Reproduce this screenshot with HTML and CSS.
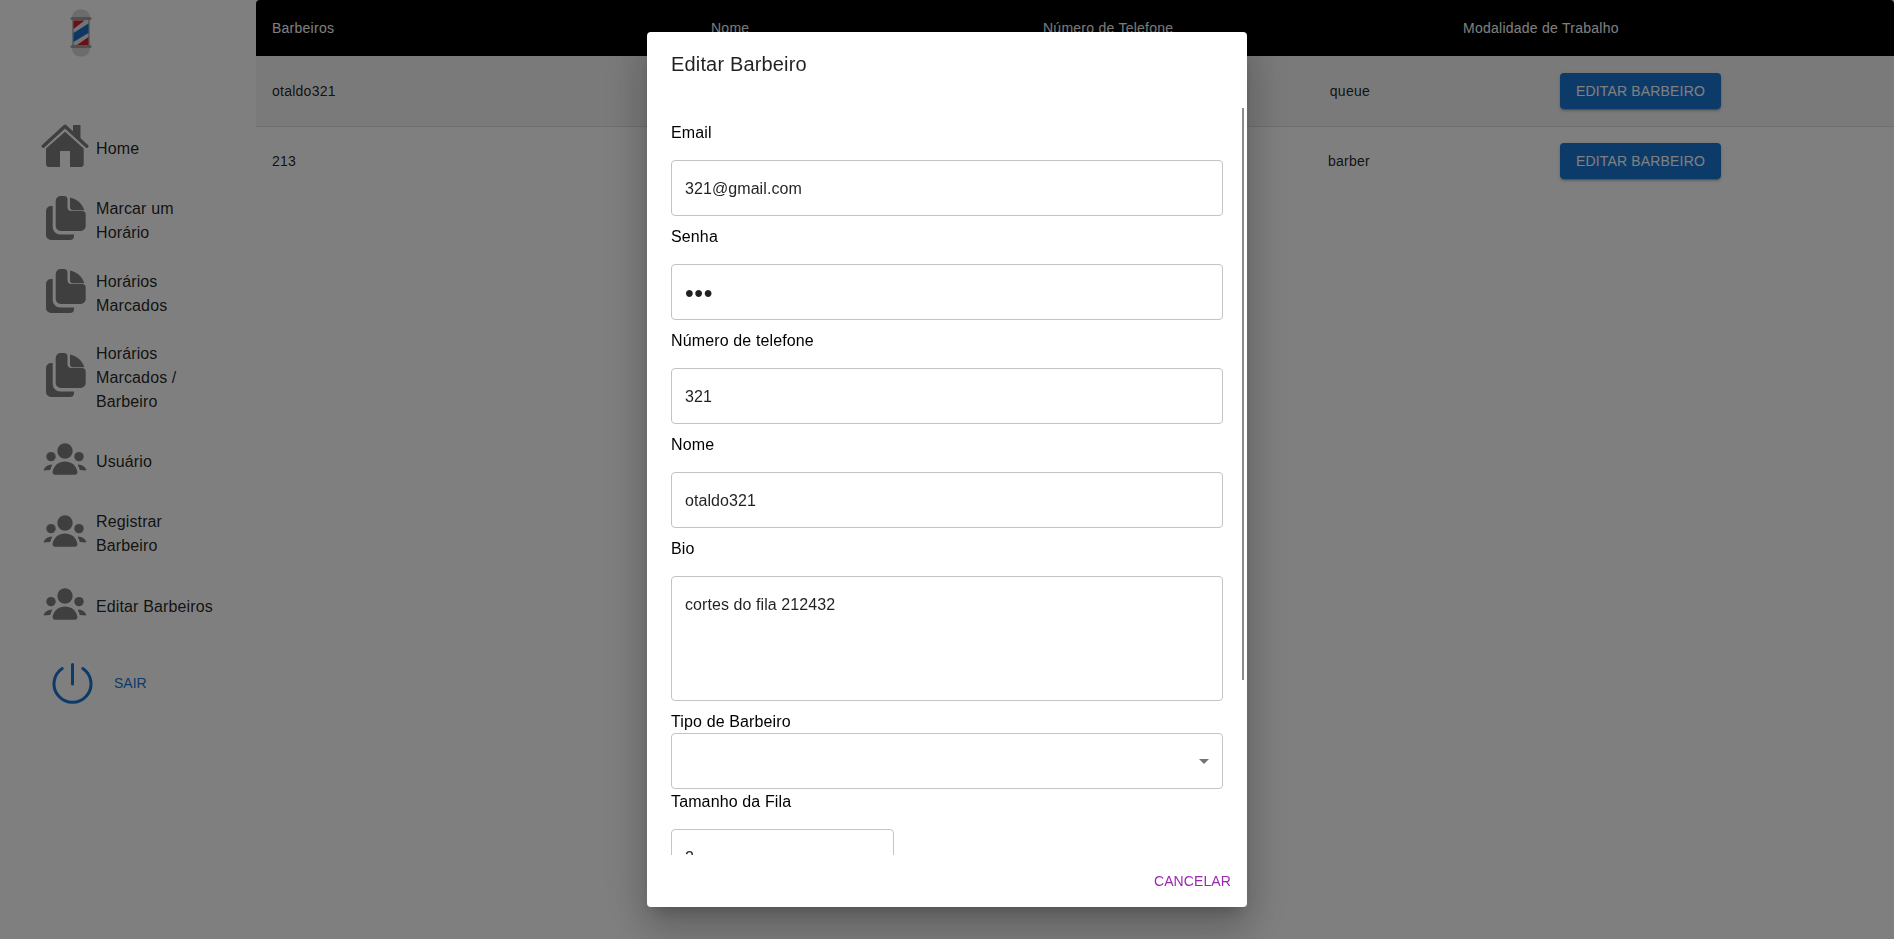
FILE: index.html
```html
<!DOCTYPE html>
<html lang="pt-BR">
<head>
<meta charset="utf-8">
<title>Editar Barbeiros</title>
<link rel="stylesheet" href="styles.css">
</head>
<body>
<svg class="sprite" aria-hidden="true">
  <symbol id="ic-home" viewBox="0 0 48 48">
    <path d="M32 1h7.5v15L32 9z"/>
    <path d="M24 7.8 42.7 24.5V40a3 3 0 0 1-3 3H29V27H19v16H8a3 3 0 0 1-3-3V24.5z"/>
    <path class="roof" d="M2.2 22.2 24 2.2l21.8 20"/>
  </symbol>
  <symbol id="ic-docs" viewBox="0 0 48 48">
    <path d="M14.7 5a5 5 0 0 1 5-5H23a3.5 3.5 0 0 1 3.5 3.5V11a4 4 0 0 0 4 4H41a3.7 3.7 0 0 1 3.7 3.7V30a5 5 0 0 1-5 5H19.7a5 5 0 0 1-5-5z"/>
    <path d="M29 1.5C36 3 41.5 8 43.3 14.2H32a3 3 0 0 1-3-3z"/>
    <path d="M5 15a5 5 0 0 1 5-5h1.7v21a7.5 7.5 0 0 0 7.5 7.5H33V40a4 4 0 0 1-4 4H10a5 5 0 0 1-5-5z"/>
  </symbol>
  <symbol id="ic-users" viewBox="0 0 48 48">
    <circle cx="24" cy="14" r="7.7"/>
    <circle cx="10" cy="19.6" r="4.7"/>
    <circle cx="38" cy="19.6" r="4.7"/>
    <path d="M14 37.7a2.5 2.5 0 0 1-2.4-3C13 28 18 24.5 24 24.5S35 28 36.4 34.7a2.5 2.5 0 0 1-2.4 3z"/>
    <path d="M3.4 33.4a.7.7 0 0 1-.6-1C4 29.500 7 27.800 10.600 27.400c.5 0 .7.4.5.800-.7 1.300-1.300 2.700-1.700 4.200-.1.4-.4.700-.9.700z"/>
    <path d="M44.600 33.400a.7.7 0 0 0 .6-1C44 29.500 41 27.800 37.400 27.400c-.5 0-.7.4-.5.800.7 1.300 1.300 2.700 1.700 4.200.1.4.4.700.9.700z"/>
  </symbol>
</svg>

<div class="app">
  <aside class="sidebar">
    <div class="logo">
      <svg class="pole" viewBox="0 0 22 48" aria-label="Barbearia">
        <rect class="pole-glass" x="2.500" y="10" width="17" height="27"/>
        <rect class="pole-white" x="3.500" y="11" width="15" height="25"/>
        <path class="pole-red" d="M3.500 11.500H14.500L3.500 20zM18.500 28V36H7z"/>
        <path class="pole-blue" d="M3.500 24 18.500 14.500V24L3.500 33z"/>
        <path class="pole-cap" d="M2 9C2 3 6 .5 11 .5S20 3 20 9z"/>
        <rect class="pole-band" x=".5" y="8" width="21" height="3" rx="1.500"/>
        <rect class="pole-band" x=".5" y="36" width="21" height="3" rx="1.500"/>
        <path class="pole-cap" d="M2 39c0 6 4 8.500 9 8.500S20 45 20 39z"/>
      </svg>
    </div>
    <nav class="nav">
      <a class="nav-item"><svg class="nav-icon"><use href="#ic-home"/></svg><span class="nav-label">Home</span></a>
      <a class="nav-item"><svg class="nav-icon"><use href="#ic-docs"/></svg><span class="nav-label">Marcar um Horário</span></a>
      <a class="nav-item"><svg class="nav-icon"><use href="#ic-docs"/></svg><span class="nav-label">Horários Marcados</span></a>
      <a class="nav-item"><svg class="nav-icon"><use href="#ic-docs"/></svg><span class="nav-label">Horários Marcados / Barbeiro</span></a>
      <a class="nav-item"><svg class="nav-icon"><use href="#ic-users"/></svg><span class="nav-label">Usuário</span></a>
      <a class="nav-item"><svg class="nav-icon"><use href="#ic-users"/></svg><span class="nav-label">Registrar Barbeiro</span></a>
      <a class="nav-item"><svg class="nav-icon"><use href="#ic-users"/></svg><span class="nav-label">Editar Barbeiros</span></a>
    </nav>
    <button class="logout" type="button">
      <svg class="power" viewBox="0 0 41 41"><path d="M10.200 5.500A18.500 18.500 0 1 0 30.800 5.500M20.500 1.500V21"/></svg>
      <span>SAIR</span>
    </button>
  </aside>

  <main class="main">
    <div class="table-head">
      <span>Barbeiros</span>
      <span>Nome</span>
      <span>Número de Telefone</span>
      <span>Modalidade de Trabalho</span>
    </div>
    <div class="table-row is-hover">
      <span>otaldo321</span>
      <span class="cell-mode">queue</span>
      <button class="btn-edit" type="button">Editar Barbeiro</button>
    </div>
    <div class="table-row">
      <span>213</span>
      <span class="cell-mode">barber</span>
      <button class="btn-edit" type="button">Editar Barbeiro</button>
    </div>
  </main>
</div>

<div class="backdrop">
  <section class="dialog" role="dialog" aria-labelledby="dialog-title">
    <h2 class="dialog-title" id="dialog-title">Editar Barbeiro</h2>
    <form class="dialog-content">
      <label class="field-label" for="f-email">Email</label>
      <input class="field" id="f-email" type="text" value="321@gmail.com">
      <label class="field-label" for="f-pass">Senha</label>
      <input class="field field-secret" id="f-pass" type="password" value="321">
      <label class="field-label" for="f-phone">Número de telefone</label>
      <input class="field" id="f-phone" type="text" value="321">
      <label class="field-label" for="f-name">Nome</label>
      <input class="field" id="f-name" type="text" value="otaldo321">
      <label class="field-label" for="f-bio">Bio</label>
      <textarea class="field field-area" id="f-bio">cortes do fila 212432</textarea>
      <span class="field-label field-label-tight">Tipo de Barbeiro</span>
      <div class="field field-select">
        <svg class="select-arrow" viewBox="0 0 10 5"><path d="M0 0h10L5 5z"/></svg>
      </div>
      <label class="field-label" for="f-queue">Tamanho da Fila</label>
      <input class="field field-short" id="f-queue" type="text" value="2">
    </form>
    <div class="scroll-thumb"></div>
    <div class="dialog-actions">
      <button class="btn-cancel" type="button">Cancelar</button>
    </div>
  </section>
</div>
</body>
</html>
```
FILE: styles.css
```css
* {
  box-sizing: border-box;
}

html,
body {
  margin: 0;
  height: 100%;
  overflow: hidden;
  background: #fff;
  font-family: "Liberation Sans", Arial, sans-serif;
  color: rgba(0, 0, 0, 0.87);
}

.sprite {
  display: none;
}

.app {
  display: flex;
  height: 100%;
}

/* Sidebar */
.sidebar {
  flex: 0 0 256px;
  padding-top: 9px;
}

.logo {
  display: flex;
  height: 48px;
  margin-bottom: 67px;
  padding-left: 70px;
}

.pole {
  width: 22px;
  height: 48px;
}

.pole-glass { fill: #6f8f9a; }
.pole-white { fill: #e8e8e8; }
.pole-red { fill: #d01f2e; }
.pole-blue { fill: #1c6fc9; }
.pole-cap { fill: #d8d8d8; }
.pole-band { fill: #a0a0a0; }

.nav {
  display: flex;
  flex-direction: column;
  gap: 24.3px;
  padding-left: 41px;
}

.nav-item {
  display: flex;
  align-items: center;
  gap: 7px;
  min-height: 48px;
  font-size: 16px;
  line-height: 24px;
  letter-spacing: 0.13px;
}

.nav-icon {
  flex: 0 0 48px;
  width: 48px;
  height: 48px;
  fill: #7f7f7f;
}

.roof {
  fill: none;
  stroke: #7f7f7f;
  stroke-width: 3.4;
  stroke-linecap: round;
  stroke-linejoin: round;
}

.nav-label {
  width: 120px;
  margin: 1px 0 -1px;
}

.nav-item:last-child .nav-label {
  width: auto;
  white-space: nowrap;
}

.logout {
  display: flex;
  align-items: center;
  gap: 21px;
  margin: 33px 0 0 52px;
  padding: 0;
  border: 0;
  background: none;
  font: inherit;
  font-size: 14px;
  color: #1976d2;
}

.power {
  width: 41px;
  height: 41px;
  fill: none;
  stroke: #1976d2;
  stroke-width: 3;
  stroke-linecap: round;
}

/* Table */
.main {
  flex: 1;
  min-width: 0;
  font-size: 14px;
  letter-spacing: 0.25px;
}

.table-head {
  display: grid;
  grid-template-columns: 439px 332px 420px 1fr;
  align-items: center;
  height: 56px;
  padding-left: 16px;
  border-radius: 4px 4px 0 0;
  background: #000;
  color: #fff;
}

.table-row {
  display: grid;
  grid-template-columns: 439px 659px 1fr;
  align-items: center;
  height: 71px;
  padding-left: 16px;
  border-bottom: 1px solid #e0e0e0;
}

.table-row:last-child {
  height: 68px;
  border-bottom: 0;
}

.is-hover {
  background: rgba(0, 0, 0, 0.04);
}

.cell-mode {
  text-align: right;
}

.btn-edit {
  justify-self: start;
  width: 161px;
  height: 36.5px;
  margin-left: 190px;
  padding: 0;
  border: 0;
  border-radius: 4px;
  background: #1976d2;
  box-shadow: 0 3px 1px -2px rgba(0, 0, 0, 0.2), 0 2px 2px rgba(0, 0, 0, 0.14), 0 1px 5px rgba(0, 0, 0, 0.12);
  font: inherit;
  font-size: 14px;
  letter-spacing: 0.16px;
  text-transform: uppercase;
  color: #fff;
}

/* Dialog */
.backdrop {
  position: fixed;
  inset: 0;
  display: flex;
  align-items: center;
  justify-content: center;
  background: rgba(0, 0, 0, 0.5);
}

.dialog {
  position: relative;
  display: flex;
  flex-direction: column;
  width: 600px;
  height: 875px;
  border-radius: 4px;
  background: #fff;
  box-shadow: 0 11px 15px -7px rgba(0, 0, 0, 0.2), 0 24px 38px 3px rgba(0, 0, 0, 0.14), 0 9px 46px 8px rgba(0, 0, 0, 0.12);
}

.dialog-title {
  flex: none;
  margin: 0;
  padding: 16px 24px;
  font-size: 20px;
  font-weight: 400;
  line-height: 32px;
  letter-spacing: 0.16px;
}

.dialog-content {
  flex: 1;
  min-height: 0;
  display: flex;
  flex-direction: column;
  overflow: hidden;
  padding: 24px 24px 0;
}

.field-label {
  flex: none;
  margin-bottom: 14px;
  font-size: 16px;
  line-height: 26px;
  letter-spacing: 0.13px;
  color: #000;
}

.field-label-tight {
  margin-top: 8px;
  margin-bottom: -2px;
}

.field {
  flex: none;
  display: block;
  width: 552px;
  height: 56px;
  margin-bottom: 8px;
  padding: 17px 14px 15px 13px;
  border: 1px solid #c4c4c4;
  border-radius: 4px;
  outline: 0;
  background: #fff;
  font: inherit;
  font-size: 16px;
  line-height: 23px;
  letter-spacing: 0.08px;
  color: rgba(0, 0, 0, 0.87);
}

.field-secret {
  padding-top: 16px;
  padding-bottom: 14px;
  font-size: 25px;
  letter-spacing: 0.6px;
}

.field-area {
  height: 125px;
  margin-bottom: 0;
  padding-top: 16px;
  resize: none;
  overflow: hidden;
}

.field-select {
  position: relative;
  margin-bottom: 0;
}

.select-arrow {
  position: absolute;
  top: 24.500px;
  right: 13px;
  width: 10px;
  height: 5px;
  fill: #757575;
}

.field-short {
  width: 223px;
}

.scroll-thumb {
  position: absolute;
  top: 76px;
  right: 3px;
  width: 2px;
  height: 572px;
  background: #8c8c8c;
}

.dialog-actions {
  flex: none;
  display: flex;
  justify-content: flex-end;
  padding: 8px;
}

.btn-cancel {
  height: 36.5px;
  padding: 6px 8px;
  border: 0;
  background: none;
  font: inherit;
  font-size: 14px;
  letter-spacing: 0.1px;
  text-transform: uppercase;
  color: #9c27b0;
}
```
